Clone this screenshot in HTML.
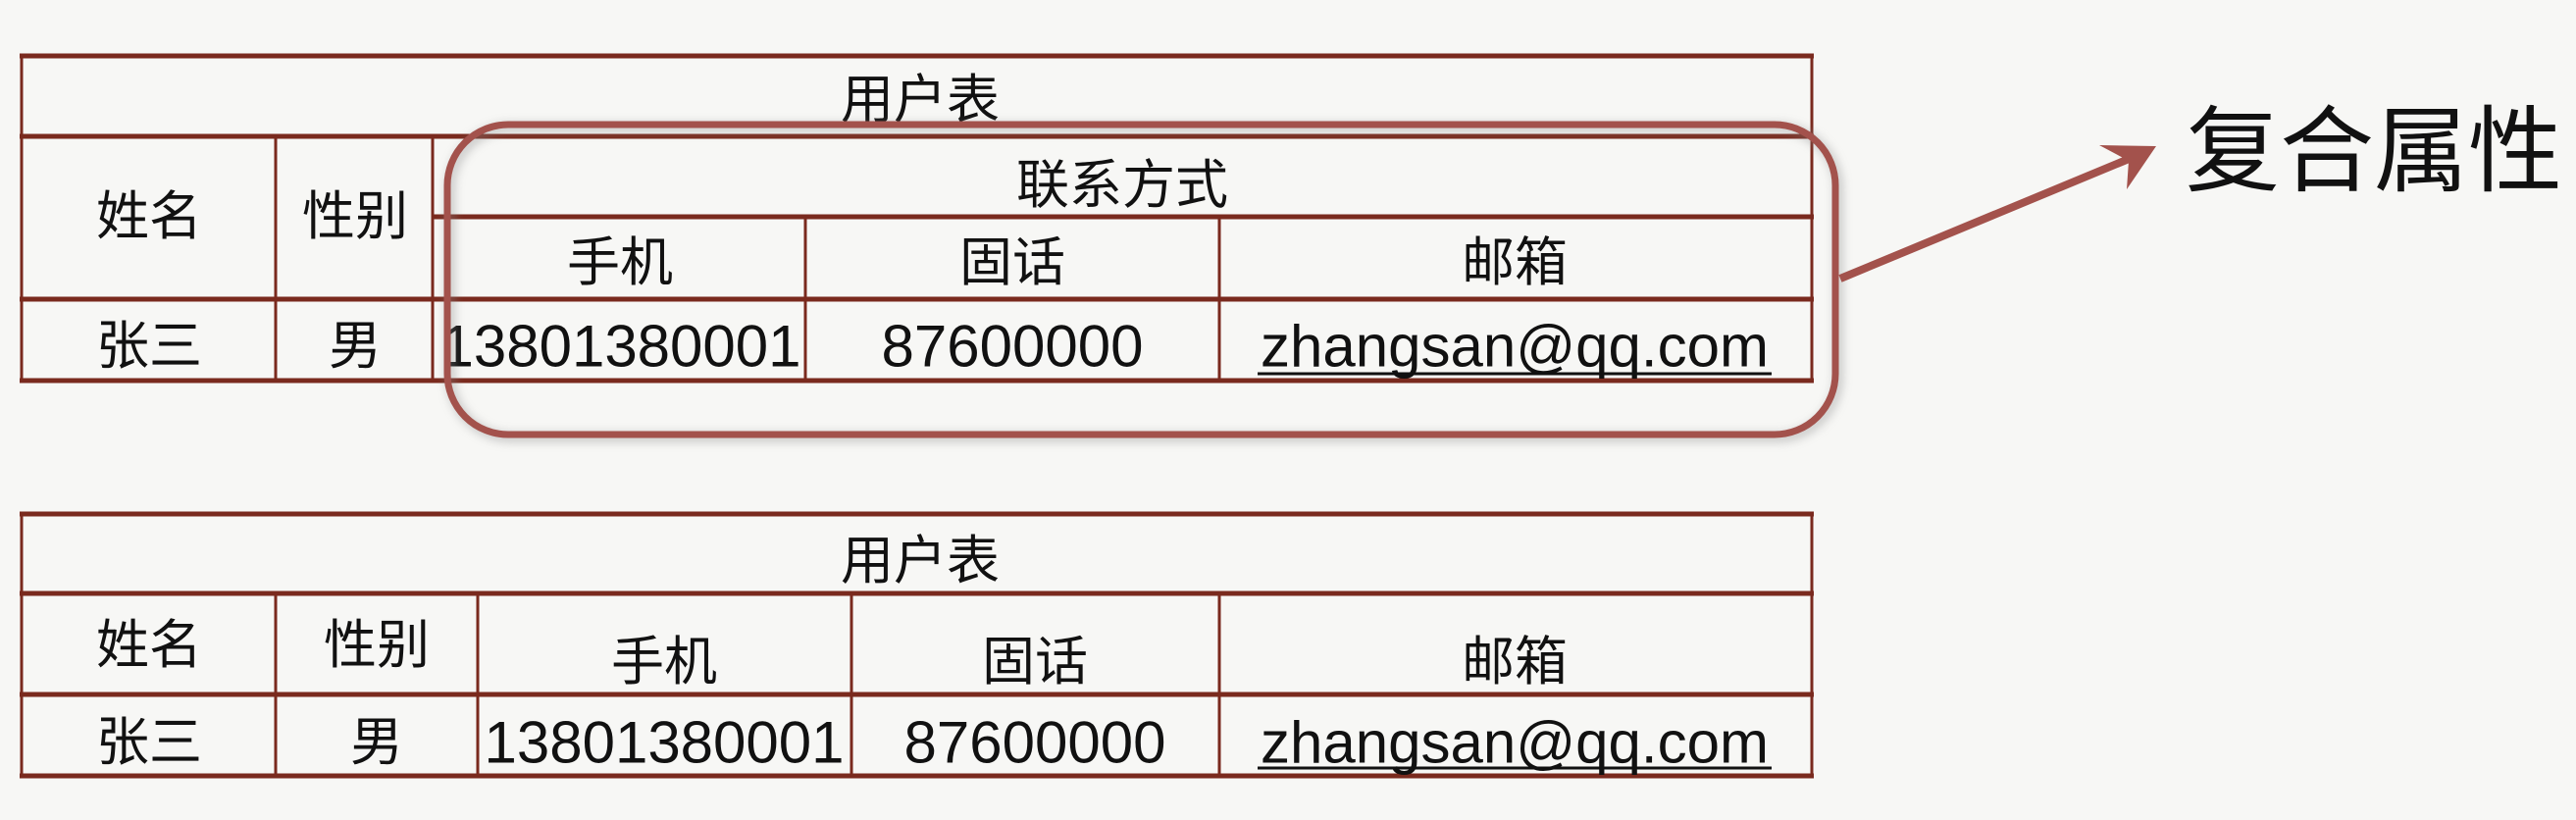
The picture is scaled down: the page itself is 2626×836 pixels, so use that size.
<!DOCTYPE html>
<html><head><meta charset="utf-8"><style>
html,body{margin:0;padding:0;background:#f7f7f5;}
svg{display:block}
text{font-family:"Liberation Sans","Noto Sans CJK SC",sans-serif;fill:#111;}
.c{font-size:54px}
.n{font-size:60px}
</style></head><body>
<svg width="2626" height="836" viewBox="0 0 2626 836" xmlns="http://www.w3.org/2000/svg">
<defs><filter id="sh" x="-10%" y="-20%" width="120%" height="140%"><feGaussianBlur stdDeviation="5"/></filter></defs>
<rect width="2626" height="836" fill="#f7f7f5"/>
<g stroke="#7a2a1e" fill="none">
<g stroke-width="5">
<line x1="20" y1="57" x2="1849" y2="57"/>
<line x1="20" y1="139" x2="1849" y2="139"/>
<line x1="441" y1="221" x2="1849" y2="221"/>
<line x1="20" y1="305" x2="1849" y2="305"/>
<line x1="20" y1="388" x2="1849" y2="388"/>
</g>
<g stroke-width="3">
<line x1="22" y1="57" x2="22" y2="388"/>
<line x1="1847" y1="57" x2="1847" y2="388"/>
<line x1="281" y1="139" x2="281" y2="388"/>
<line x1="441" y1="139" x2="441" y2="388"/>
<line x1="821" y1="221" x2="821" y2="388"/>
<line x1="1243" y1="221" x2="1243" y2="388"/>
</g>
<g stroke-width="5">
<line x1="20" y1="524" x2="1849" y2="524"/>
<line x1="20" y1="605" x2="1849" y2="605"/>
<line x1="20" y1="708" x2="1849" y2="708"/>
<line x1="20" y1="791" x2="1849" y2="791"/>
</g>
<g stroke-width="3">
<line x1="22" y1="524" x2="22" y2="791"/>
<line x1="1847" y1="524" x2="1847" y2="791"/>
<line x1="281" y1="605" x2="281" y2="791"/>
<line x1="487" y1="605" x2="487" y2="791"/>
<line x1="868" y1="605" x2="868" y2="791"/>
<line x1="1243" y1="605" x2="1243" y2="791"/>
</g>
</g>
<g text-anchor="middle" dominant-baseline="central">
<text class="c" x="938" y="102">用户表</text>
<text class="c" x="152" y="221">姓名</text>
<text class="c" x="362" y="221">性别</text>
<text class="c" x="1144" y="189">联系方式</text>
<text class="c" x="632" y="268">手机</text>
<text class="c" x="1032" y="268">固话</text>
<text class="c" x="1544" y="268">邮箱</text>
<text class="c" x="152" y="353">张三</text>
<text class="c" x="362" y="353">男</text>
<text class="n" x="633" y="353">13801380001</text>
<text class="n" x="1032" y="353">87600000</text>
<text class="n" x="1544" y="353">zhangsan@qq.com</text>
<text class="c" x="938" y="572">用户表</text>
<text class="c" x="152" y="658">姓名</text>
<text class="c" x="384" y="658">性别</text>
<text class="c" x="677" y="675">手机</text>
<text class="c" x="1055" y="675">固话</text>
<text class="c" x="1544" y="675">邮箱</text>
<text class="c" x="152" y="757">张三</text>
<text class="c" x="384" y="757">男</text>
<text class="n" x="677" y="757">13801380001</text>
<text class="n" x="1055" y="757">87600000</text>
<text class="n" x="1544" y="757">zhangsan@qq.com</text>
</g>
<line x1="1282" y1="381" x2="1806" y2="381" stroke="#111" stroke-width="3"/>
<line x1="1282" y1="783" x2="1806" y2="783" stroke="#111" stroke-width="3"/>
<rect x="459" y="130" width="1415" height="316" rx="62" fill="none" stroke="#888" stroke-width="8" opacity="0.5" filter="url(#sh)"/>
<rect x="456" y="127" width="1415" height="316" rx="62" fill="none" stroke="#a3524c" stroke-width="7"/>
<line x1="1876" y1="284" x2="2175" y2="160" stroke="#a3524c" stroke-width="8"/>
<polygon points="2198,149 2140,148 2170,164 2168,193" fill="#a3524c"/>
<text x="2228" y="155" font-size="96" dominant-baseline="central">复合属性</text>
</svg>
</body></html>
